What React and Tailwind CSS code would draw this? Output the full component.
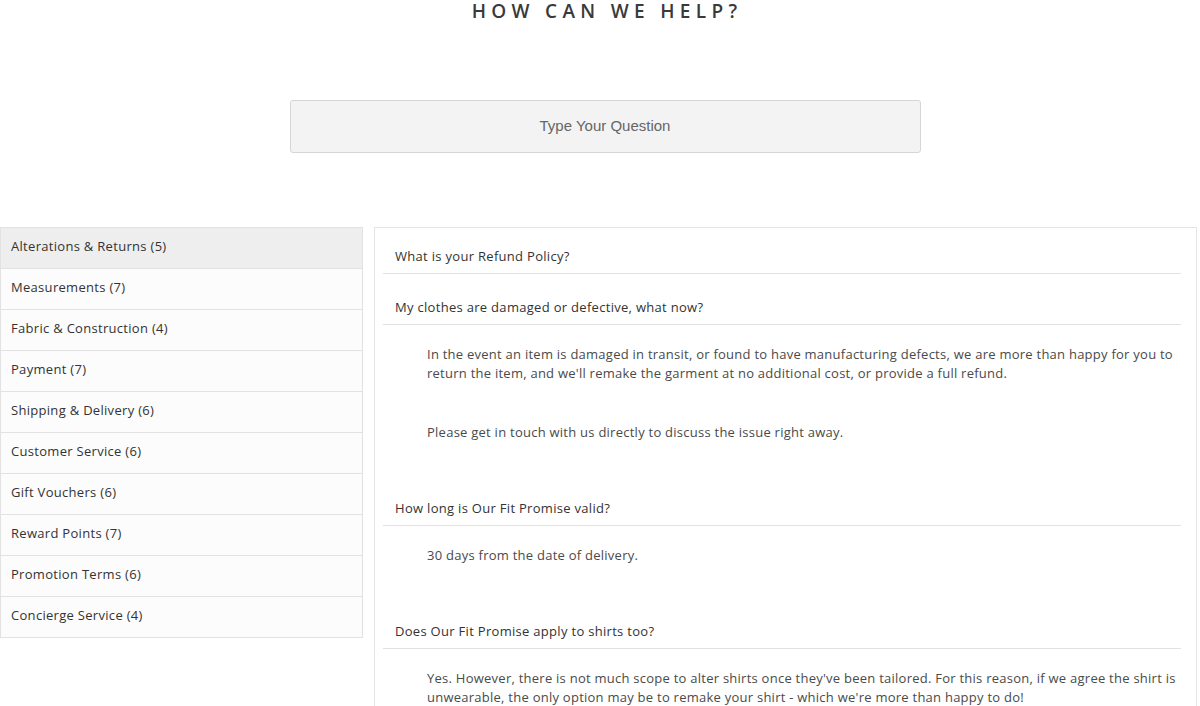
import { useState } from "react";

const categories = [
  { name: "Alterations & Returns", count: 5 },
  { name: "Measurements", count: 7 },
  { name: "Fabric & Construction", count: 4 },
  { name: "Payment", count: 7 },
  { name: "Shipping & Delivery", count: 6 },
  { name: "Customer Service", count: 6 },
  { name: "Gift Vouchers", count: 6 },
  { name: "Reward Points", count: 7 },
  { name: "Promotion Terms", count: 6 },
  { name: "Concierge Service", count: 4 },
];

const faqs = [
  { q: "What is your Refund Policy?", a: null },
  {
    q: "My clothes are damaged or defective, what now?",
    a: [
      "In the event an item is damaged in transit, or found to have manufacturing defects, we are more than happy for you to return the item, and we'll remake the garment at no additional cost, or provide a full refund.",
      "Please get in touch with us directly to discuss the issue right away.",
    ],
  },
  { q: "How long is Our Fit Promise valid?", a: ["30 days from the date of delivery."] },
  {
    q: "Does Our Fit Promise apply to shirts too?",
    a: [
      "Yes. However, there is not much scope to alter shirts once they've been tailored. For this reason, if we agree the shirt is unwearable, the only option may be to remake your shirt - which we're more than happy to do!",
    ],
  },
];

export default function App() {
  const [active, setActive] = useState(0);
  const [query, setQuery] = useState("");

  return (
    <div className="min-h-screen bg-white font-['Open_Sans',sans-serif] text-[#333]">
      {/* Header */}
      <h1 className="pl-[14px] text-center font-['Open_Sans',sans-serif] text-[19px] font-semibold leading-[23px] tracking-[0.28em] text-[#3a3a3a]">
        HOW CAN WE HELP?
      </h1>

      {/* Search */}
      <div className="mt-[77px] flex justify-center pl-[10px]">
        <input
          value={query}
          onChange={(e) => setQuery(e.target.value)}
          placeholder="Type Your Question"
          className="h-[53px] w-[631px] rounded-[3px] border border-[#d6d6d6] bg-[#f3f3f3] pb-[2px] text-center font-['Liberation_Sans',Arial,sans-serif] text-[15px] text-[#555] placeholder:text-[#666] outline-none"
        />
      </div>

      <div className="mt-[74px] flex items-start">
        {/* Categories */}
        <ul className="w-[363px] shrink-0 border border-[#e2e2e2] bg-[#fcfcfc]">
          {categories.map((c, i) => (
            <li
              key={c.name}
              onClick={() => setActive(i)}
              className={`flex cursor-pointer items-center px-[10px] pb-[2px] text-[13px] tracking-[0.3px] text-[#333] ${
                i < categories.length - 1 ? "h-[41px] border-b border-[#e2e2e2]" : "h-[40px]"
              } ${active === i ? "bg-[#eeeeee]" : ""}`}
            >
              {c.name} ({c.count})
            </li>
          ))}
        </ul>

        {/* Questions */}
        <div className="ml-[11px] mr-[3px] flex-1 self-stretch border border-[#e5e5e5] pl-[8px] pr-[15px]">
          {faqs.map((f, i) => (
            <div key={f.q}>
              <div
                className={`border-b border-[#e2e2e2] px-3 pb-[8px] text-[13px] leading-[18px] tracking-[0.3px] text-[#333] ${
                  i === 0 ? "pt-[19px]" : "pt-[24px]"
                }`}
              >
                {f.q}
              </div>
              {f.a && (
                <div className="mr-[-10px] space-y-[40px] pb-[33px] pl-[44px] pt-[20px] text-[13px] leading-[19px] tracking-[0.25px] text-[#4a4a4a]">
                  {f.a.map((p) => (
                    <p key={p}>{p}</p>
                  ))}
                </div>
              )}
            </div>
          ))}
        </div>
      </div>
    </div>
  );
}
